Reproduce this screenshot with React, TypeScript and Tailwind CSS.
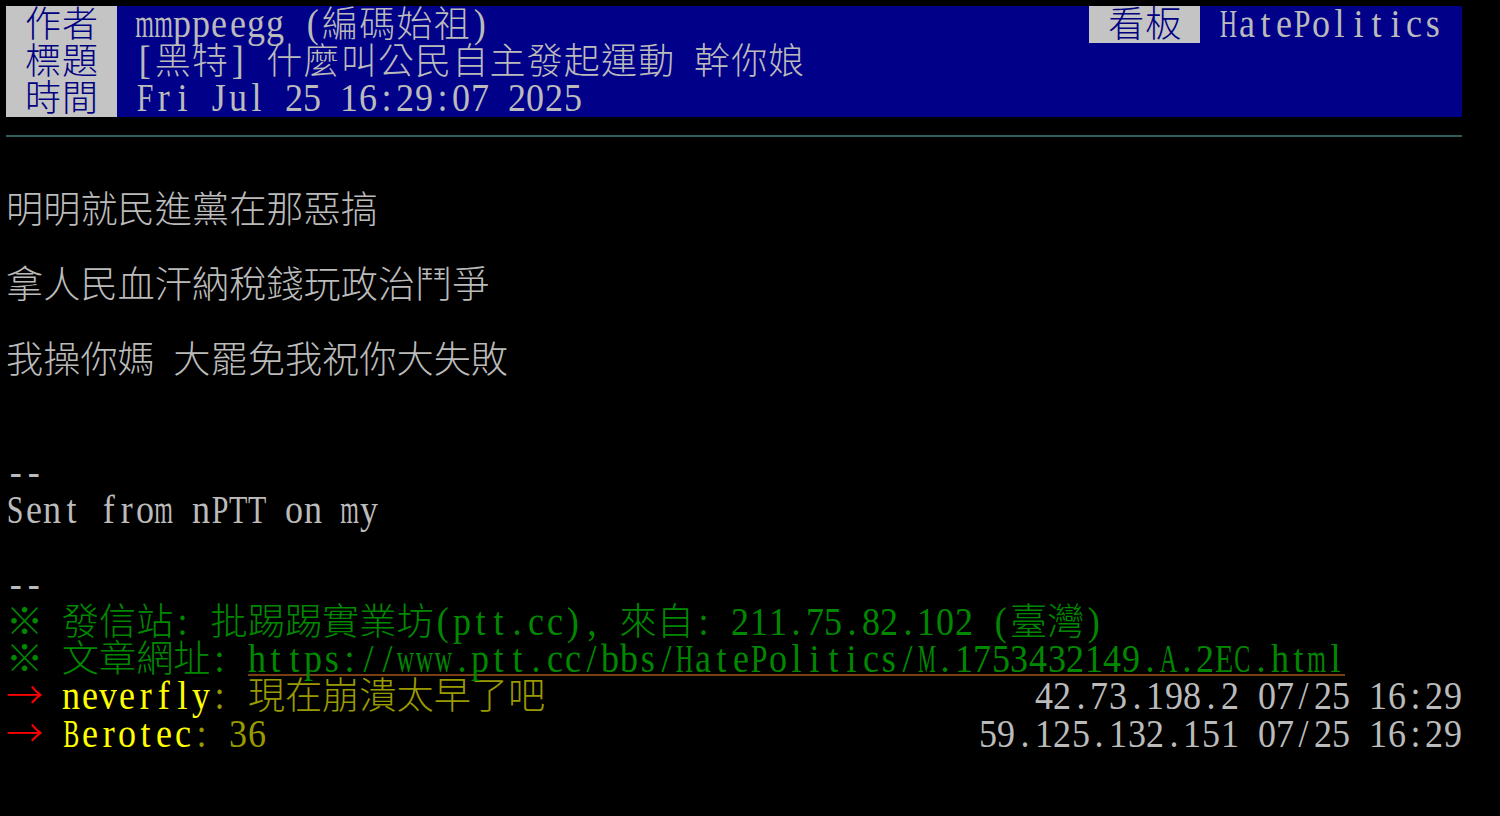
import React from "react";

// MingLiU-like terminal cells: ascii = half width, CJK = full width
const NARROWEST = "MW";
const WIDE = "mwHANDCBOGUQVXKR";
const MID = "ETPSLFZY";

const scaleFor = (ch: string) => {
  if (NARROWEST.includes(ch)) return "scale-x-[0.5]";
  if (WIDE.includes(ch)) return "scale-x-[0.6]";
  if (MID.includes(ch)) return "scale-x-[0.75]";
  return "scale-x-[0.9]";
};

const T: React.FC<{ text: string; className?: string; small?: boolean }> = ({
  text,
  className,
  small,
}) => {
  return (
    <span className={className}>
      {Array.from(text).map((ch, i) =>
        ch.charCodeAt(0) > 0xff ? (
          <span
            key={i}
            className={`inline-block w-[37.2px] text-center font-['Noto_Sans_CJK_TC',sans-serif] font-light leading-[28px] ${
              small ? "text-[36px]" : ""
            }`}
          >
            {ch}
          </span>
        ) : (
          <span
            key={i}
            className="inline-flex w-[18.6px] justify-center text-[40px] leading-[28px]"
          >
            <span className={`inline-block ${scaleFor(ch)}`}>
              {ch === " " ? "\u00a0" : ch}
            </span>
          </span>
        )
      )}
    </span>
  );
};

const MetaLine: React.FC<{
  tag: string;
  value: string;
  children?: React.ReactNode;
}> = ({ tag, value, children }) => (
  <div className="flex h-[37px] leading-[37px] whitespace-nowrap">
    <div className="w-[111px] bg-[#c4c4c4] text-center text-[#000080]">
      <T text={tag} small />
    </div>
    <div className="pl-[18.6px] text-[#bbbbbb]">
      <T text={value} small />
    </div>
    {children}
  </div>
);

const Row: React.FC<{ children?: React.ReactNode; className?: string }> = ({
  children,
  className = "",
}) => (
  <div
    className={`h-[37.4px] leading-[37.4px] whitespace-nowrap ${className}`}
  >
    {children}
  </div>
);

const Push: React.FC<{ user: string; content: string; ipdate: string }> = ({
  user,
  content,
  ipdate,
}) => (
  <Row className="flex justify-between">
    <div>
      <T text="→ " className="text-[#ff0000]" />
      <T text={user} className="text-[#ffff00]" />
      <T text={content} className="text-[#999900]" />
    </div>
    <div className="text-[#bbbbbb]">
      <T text={ipdate} />
    </div>
  </Row>
);

export default function App() {
  return (
    <div className="min-h-screen bg-black pl-[6px] pt-[6px] font-['Liberation_Serif','Noto_Sans_CJK_TC',serif] text-[37.2px]">
      <div className="w-[1456px]">
        <div className="bg-[#000088]">
          <MetaLine tag="作者" value="mmppeegg (編碼始祖)">
            <div className="ml-auto w-[111px] bg-[#c4c4c4] text-center text-[#000080]">
              <T text="看板" small />
            </div>
            <div className="pl-[18.6px] pr-[20px] text-[#bbbbbb]">
              <T text="HatePolitics" />
            </div>
          </MetaLine>
          <MetaLine tag="標題" value="[黑特] 什麼叫公民自主發起運動 幹你娘" />
          <MetaLine tag="時間" value="Fri Jul 25 16:29:07 2025" />
        </div>

        <div className="mt-[18px] h-[2px] bg-[#2f5f5c]" />

        <div className="mt-[18px] text-[#bbbbbb]">
          <Row />
          <Row>
            <T text="明明就民進黨在那惡搞" />
          </Row>
          <Row />
          <Row>
            <T text="拿人民血汗納稅錢玩政治鬥爭" />
          </Row>
          <Row />
          <Row>
            <T text="我操你媽 大罷免我祝你大失敗" />
          </Row>
          <Row />
          <Row />
          <Row>
            <T text="--" />
          </Row>
          <Row>
            <T text="Sent from nPTT on my" />
          </Row>
          <Row />
          <Row>
            <T text="--" />
          </Row>
          <Row className="text-[#008800]">
            <T text="※ 發信站: 批踢踢實業坊(ptt.cc), 來自: 211.75.82.102 (臺灣)" />
          </Row>
          <Row className="text-[#008800]">
            <T text="※ 文章網址: " />
            <span className="inline-flex border-b-2 border-[#7a3e16] leading-[28px]">
              <T text="https://www.ptt.cc/bbs/HatePolitics/M.1753432149.A.2EC.html" />
            </span>
          </Row>
          <Push
            user="neverfly"
            content=": 現在崩潰太早了吧"
            ipdate="42.73.198.2 07/25 16:29"
          />
          <Push user="Berotec" content=": 36" ipdate="59.125.132.151 07/25 16:29" />
        </div>
      </div>
    </div>
  );
}
